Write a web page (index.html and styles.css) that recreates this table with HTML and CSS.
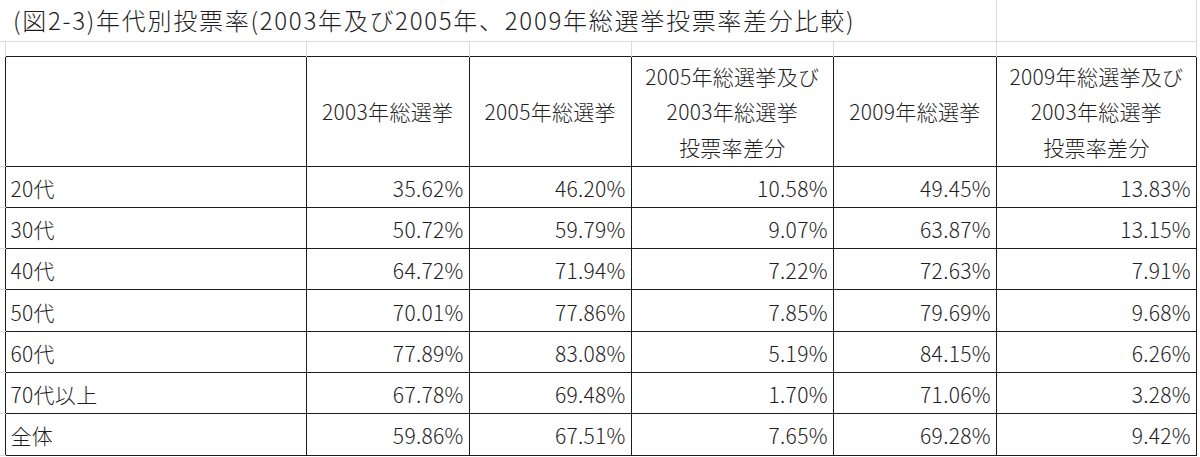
FILE: index.html
```html
<!DOCTYPE html>
<html lang="ja">
<head>
<meta charset="utf-8">
<title>年代別投票率</title>
<link rel="stylesheet" href="styles.css">
</head>
<body>
<table class="sheet">
  <colgroup>
    <col class="c-gut">
    <col class="c-a">
    <col class="c-b">
    <col class="c-c">
    <col class="c-d">
    <col class="c-e">
    <col class="c-f">
  </colgroup>
  <tr class="r-title">
    <td class="gut"></td>
    <td class="title" colspan="5">(図2-3)年代別投票率(2003年及び2005年、2009年総選挙投票率差分比較)</td>
    <td class="g"></td>
  </tr>
  <tr class="r-blank">
    <td class="gut"></td>
    <td class="b"></td><td class="b"></td><td class="b"></td><td class="b"></td><td class="b"></td><td class="b"></td>
  </tr>
  <tr class="r-head">
    <td class="gut"></td>
    <td class="cell"></td>
    <td class="cell hd">2003年総選挙</td>
    <td class="cell hd">2005年総選挙</td>
    <td class="cell hd">2005年総選挙及び<br>2003年総選挙<br>投票率差分</td>
    <td class="cell hd">2009年総選挙</td>
    <td class="cell hd">2009年総選挙及び<br>2003年総選挙<br>投票率差分</td>
  </tr>
  <tr class="r-data">
    <td class="gut"></td>
    <td class="cell lb">20代</td><td class="cell num">35.62%</td><td class="cell num">46.20%</td><td class="cell num">10.58%</td><td class="cell num">49.45%</td><td class="cell num">13.83%</td>
  </tr>
  <tr class="r-data">
    <td class="gut"></td>
    <td class="cell lb">30代</td><td class="cell num">50.72%</td><td class="cell num">59.79%</td><td class="cell num">9.07%</td><td class="cell num">63.87%</td><td class="cell num">13.15%</td>
  </tr>
  <tr class="r-data">
    <td class="gut"></td>
    <td class="cell lb">40代</td><td class="cell num">64.72%</td><td class="cell num">71.94%</td><td class="cell num">7.22%</td><td class="cell num">72.63%</td><td class="cell num">7.91%</td>
  </tr>
  <tr class="r-data">
    <td class="gut"></td>
    <td class="cell lb">50代</td><td class="cell num">70.01%</td><td class="cell num">77.86%</td><td class="cell num">7.85%</td><td class="cell num">79.69%</td><td class="cell num">9.68%</td>
  </tr>
  <tr class="r-data">
    <td class="gut"></td>
    <td class="cell lb">60代</td><td class="cell num">77.89%</td><td class="cell num">83.08%</td><td class="cell num">5.19%</td><td class="cell num">84.15%</td><td class="cell num">6.26%</td>
  </tr>
  <tr class="r-data">
    <td class="gut"></td>
    <td class="cell lb">70代以上</td><td class="cell num">67.78%</td><td class="cell num">69.48%</td><td class="cell num">1.70%</td><td class="cell num">71.06%</td><td class="cell num">3.28%</td>
  </tr>
  <tr class="r-data">
    <td class="gut"></td>
    <td class="cell lb">全体</td><td class="cell num">59.86%</td><td class="cell num">67.51%</td><td class="cell num">7.65%</td><td class="cell num">69.28%</td><td class="cell num">9.42%</td>
  </tr>
</table>
</body>
</html>
```

FILE: styles.css
```css
html, body {
  margin: 0;
  padding: 0;
  background: #ffffff;
}

body {
  font-family: "Noto Sans CJK JP", "Noto Sans", sans-serif;
  font-weight: 300;
  color: #1e1e1e;
}

.sheet {
  border-collapse: collapse;
  table-layout: fixed;
  width: 1197px;
}

.c-gut { width: 5px; }
.c-a { width: 301px; }
.c-b { width: 163px; }
.c-c { width: 162px; }
.c-d { width: 202px; }
.c-e { width: 163px; }
.c-f { width: 200px; }

td {
  padding: 0;
  box-sizing: border-box;
}

.gut {
  border-bottom: 1px solid #d9d9d9;
}

.r-title td {
  height: 41px;
  border-bottom: 1px solid #dadada;
}

.r-title .g {
  border-left: 1px solid #dadada;
  border-right: 1px solid #dadada;
}

.title {
  font-size: 24px;
  letter-spacing: 1.72px;
  white-space: nowrap;
  overflow: visible;
  padding-left: 8px;
  vertical-align: middle;
  line-height: 40px;
}

.r-blank td {
  height: 15px;
}

.r-blank .gut {
  border-bottom: none;
}

.r-blank .b {
  border-left: 1px solid #dadada;
  border-right: 1px solid #dadada;
}

.cell {
  border: 1px solid #1c1c1c;
  font-size: 21px;
  letter-spacing: 0.3px;
  vertical-align: middle;
  white-space: nowrap;
}

.r-head td {
  height: 110px;
}

.hd {
  text-align: center;
  line-height: 35.5px;
  padding-top: 2px;
}

.r-data td {
  height: 41.3px;
}

.lb {
  text-align: left;
  padding-left: 5px;
  padding-top: 2px;
}

.num {
  text-align: right;
  padding-right: 5px;
  padding-top: 2px;
}
```
